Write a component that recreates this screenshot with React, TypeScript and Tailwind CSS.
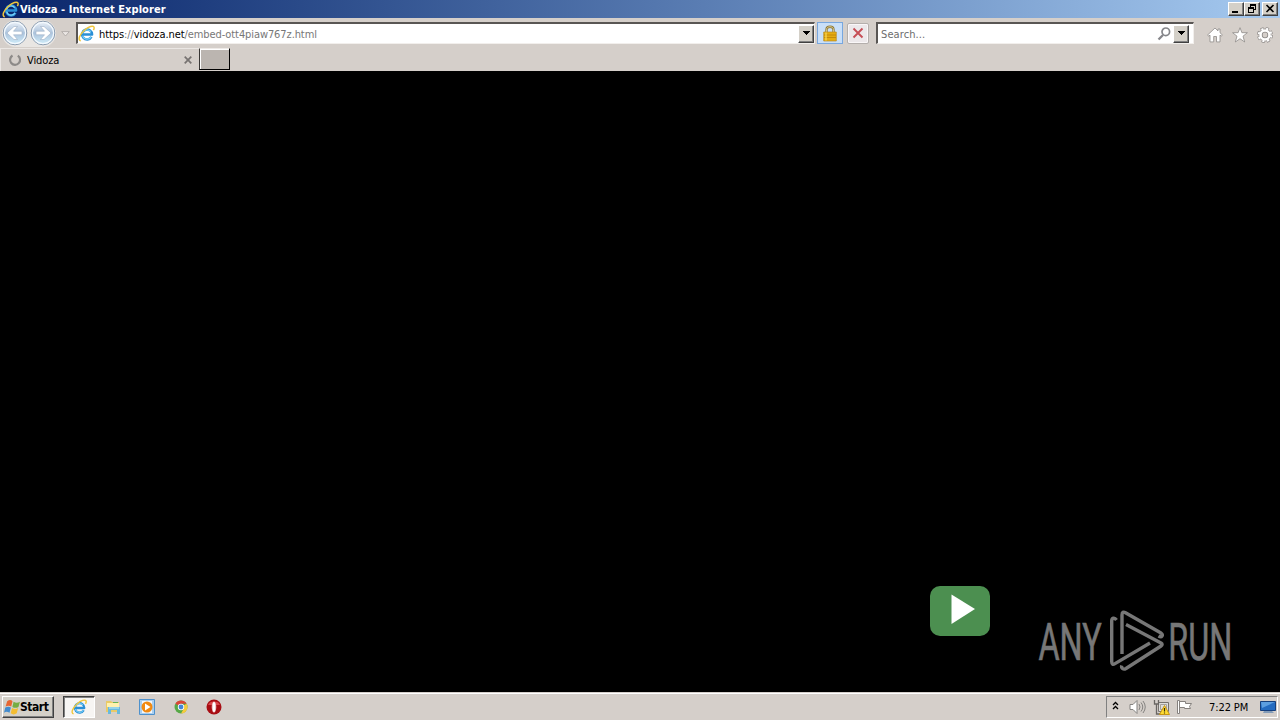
import React from "react";

function IEIcon({ className }: { className: string }) {
  return (
    <svg viewBox="0 0 16 16" className={className} fill="none">
      <path d="M12.700 11.200A4.700 4.700 0 1 1 13.300 9H5" stroke="#2a8fd6" strokeWidth="2.300" strokeLinejoin="round" />
      <path d="M12.300 11.200A4.300 4.300 0 0 1 4.400 10M4.200 8A4.500 4.500 0 0 1 12 6.200" stroke="#7ad2f8" strokeWidth="1.100" />
      <path d="M2.600 14.800C-.4 14.200 1.400 9 6 4.900 10 1.400 14.200.2 15 1.900c.4.900.1 1.900-.5 2.900" stroke="#f0c63c" strokeWidth="1.400" />
    </svg>
  );
}

function Arrow({ back }: { back?: boolean }) {
  return (
    <svg viewBox="0 0 26 26" className="size-[26px] shrink-0">
      <defs>
        <linearGradient id={back ? "gb" : "gf"} x1="0" y1="0" x2="0" y2="1">
          <stop offset="0" stopColor="#edf2f9" />
          <stop offset=".5" stopColor="#acc3dc" />
          <stop offset="1" stopColor="#d2effb" />
        </linearGradient>
      </defs>
      <circle cx="13" cy="13" r="11.8" fill={back ? "url(#gb)" : "url(#gf)"} stroke="#8395aa" strokeWidth="1" />
      <circle cx="13" cy="13" r="10.6" fill="none" stroke="#f3f9fe" strokeWidth="1.200" />
      <path
        d={back ? "M5 13l7-6.500h3.500L11.500 11.200h8.500v3.600H11.500l4 4.700H12z" : "M21 13l-7-6.500h-3.500l4 4.700H6v3.600h8.500l-4 4.700H14z"}
        fill="#fff"
        stroke="#9db0c6"
        strokeWidth=".6"
      />
    </svg>
  );
}

const raised =
  "border border-t-white border-l-white border-r-[#404040] border-b-[#404040] bg-[#d4d0c8] shadow-[inset_-1px_-1px_0_#808080]";

function DropButton() {
  return (
    <div className={"flex h-[18px] w-4 items-center justify-center " + raised}>
      <svg viewBox="0 0 7 4" className="mb-[1px] h-1 w-[7px]" shapeRendering="crispEdges">
        <path d="M0 0h7L3.500 4z" fill="#000" />
      </svg>
    </div>
  );
}

function TitleBar() {
  return (
    <header className="flex h-[18px] shrink-0 items-center bg-linear-to-r from-[#0a246a] to-[#a6caf0] pr-[2px] pl-[2px]">
      <IEIcon className="size-[17px]" />
      <span className="mt-[1px] ml-[1px] text-[11px] leading-[17px] font-bold tracking-[0.06px] whitespace-nowrap text-white">
        Vidoza - Internet Explorer
      </span>
      <div className="ml-auto flex">
        <div className={"h-[14px] w-4 " + raised}>
          <svg viewBox="0 0 14 12" className="h-3 w-[14px]"><path d="M3 8h6v2H3z" /></svg>
        </div>
        <div className={"h-[14px] w-4 " + raised}>
          <svg viewBox="0 0 14 12" className="h-3 w-[14px]" fillRule="evenodd" shapeRendering="crispEdges">
            <path d="M5 1h6v6H9V6h1V3H6v1H5zM3 4h6v6H3zM4 6v3h4V6z" />
          </svg>
        </div>
        <div className={"ml-[2px] h-[14px] w-4 " + raised}>
          <svg viewBox="0 0 14 12" className="h-3 w-[14px]">
            <path d="M3.500 2l7 7M10.500 2l-7 7" stroke="#000" strokeWidth="1.6" />
          </svg>
        </div>
      </div>
    </header>
  );
}

function NavBar() {
  return (
    <div className="flex h-[30px] shrink-0 items-center bg-[#d5cfca] pl-[2px]">
      <div className="flex h-[27px] items-center rounded-full bg-[#e9e6e3]">
        <Arrow back />
        <div className="w-[2px]" />
        <Arrow />
      </div>
      <svg viewBox="0 0 9 6" className="mt-[2px] ml-[5px] h-[6px] w-[9px]">
        <path d="M.7.600h7.600L4.500 5z" fill="#ebe7e4" stroke="#aaa5a1" strokeWidth=".8" />
      </svg>
      <div className="ml-[6px] flex h-[22px] w-[739px] items-center border-t-2 border-r border-b border-l-2 border-t-[#595654] border-r-[#f2efec] border-b-[#f2efec] border-l-[#595654] bg-white">
        <IEIcon className="size-[17px]" />
        <span className="mt-[2px] ml-1 text-[11px] leading-4 tracking-[-0.09px] whitespace-nowrap text-[#777]">
          <span className="text-black">https</span>://<span className="text-black">vidoza.net</span>
          /embed-ott4piaw767z.html
        </span>
        <div className="ml-auto"><DropButton /></div>
      </div>
      <div className="ml-[2px] flex h-[22px] w-[26px] items-center justify-center border border-[#78a7df] bg-[#c9dff8]">
        <svg viewBox="0 0 14 17" className="h-[17px] w-[14px]" fill="none">
          <path d="M3.500 8V4.500C3.500.8 10.500.8 10.500 4.500V8" stroke="#8c7737" strokeWidth="2.300" />
          <path d="M3.500 8V4.500C3.500.8 10.500.8 10.500 4.500V8" stroke="#ead99d" strokeWidth=".8" />
          <path d="M.7 7h12.600v9H.7z" fill="#e5ad13" stroke="#b98b22" strokeWidth=".7" />
          <path d="M1 10h12M1 12.500h12" stroke="#b77d07" strokeWidth=".7" />
          <path d="M3 7.500v8" stroke="#ffe469" />
        </svg>
      </div>
      <div className="ml-1 flex h-[21px] w-[22px] items-center justify-center rounded-[2px] border border-[#b4afac] bg-[#ece8ea] shadow-[inset_0_0_0_1px_#faf7f8]">
        <svg viewBox="0 0 12 12" className="size-3">
          <path d="M1.500 1.500l9 9M10.500 1.500l-9 9" stroke="#c64e56" strokeWidth="1.9" />
        </svg>
      </div>
      <div className="ml-[7px] flex h-[22px] w-[318px] items-center border-t-2 border-r border-b border-l-2 border-t-[#595654] border-r-[#f2efec] border-b-[#f2efec] border-l-[#595654] bg-white pr-1 pl-[3px]">
        <span className="mt-[2px] text-[11px] leading-4 tracking-[0.1px] text-[#6d6d6d]">Search...</span>
        <svg viewBox="0 0 15 15" className="ml-auto size-[15px]" fill="none" stroke="#85868a">
          <circle cx="8.800" cy="5.800" r="3.800" strokeWidth="1.700" />
          <path d="M6 9l-4.500 4.500" strokeWidth="2.300" />
        </svg>
        <div className="ml-[1px]"><DropButton /></div>
      </div>
      <div className="mt-1 ml-[13px] flex gap-[9px]">
        <svg viewBox="0 0 16 16" className="size-4" fill="#fff" stroke="#8e8a88" strokeWidth=".8">
          <path d="M8 1L.6 8l1.200 1.100L3 8.100v6.800h3.700V9.500h2.800v5.400H13V8.100l1.200 1 1.200-1.100L13 5.700V2h-2v1.900z" />
        </svg>
        <svg viewBox="0 0 16 16" className="size-4" fill="#fff" stroke="#8e8a88" strokeWidth=".8">
          <path d="M8 .7l1.900 5h5.500l-4.400 3.500 1.700 5.800L8 11.700 3.300 15 5 9.200.6 5.700h5.500z" />
        </svg>
        <svg viewBox="0 0 16 16" className="size-4" fill="none">
          <circle cx="8" cy="8" r="6.300" stroke="#8e8a88" strokeWidth="3.400" strokeDasharray="2.900 2.050" />
          <circle cx="8" cy="8" r="4.400" stroke="#8e8a88" strokeWidth="4" />
          <circle cx="8" cy="8" r="6.300" stroke="#fff" strokeWidth="2" strokeDasharray="2.100 2.850" strokeDashoffset="-.4" />
          <circle cx="8" cy="8" r="4.500" stroke="#fff" strokeWidth="2.600" />
        </svg>
      </div>
    </div>
  );
}

function TabBar() {
  return (
    <div className="flex h-[23px] shrink-0 bg-[#d5cfca]">
      <div className="flex w-[199px] items-center border-t border-l border-[#ebe7e4] pl-[7px]">
        <svg viewBox="0 0 14 14" className="size-[14px]" fill="none">
          <path d="M4.500 2.500A5 5 0 1 0 9.800 2.600" stroke="#8d8a88" strokeWidth="2.200" />
        </svg>
        <span className="mt-[2px] ml-[5px] text-[11px] leading-5 tracking-[-0.1px] text-black">Vidoza</span>
        <svg viewBox="0 0 8 8" className="mr-[7px] ml-auto size-2">
          <path d="M.7.700l6.600 6.600M7.300.7L.7 7.300" stroke="#777371" strokeWidth="1.700" />
        </svg>
      </div>
      <div className="h-[22px] w-[31px] border-t border-r border-b border-l border-t-[#eeeae7] border-r-black border-b-black border-l-[#383634] bg-[#bbb5b0] shadow-[inset_1px_1px_0_#fff]" />
    </div>
  );
}

function Content() {
  return (
    <main className="flex min-h-0 flex-1 bg-black">
      <div className="mt-[515px] ml-[930px] flex h-[50px] w-[60px] shrink-0 rounded-[10px] bg-[#4c8f50]">
        <svg viewBox="0 0 60 50" className="h-[50px] w-[60px]"><path d="M21.500 8.500L45 23 21.500 38z" fill="#fff" /></svg>
      </div>
      <svg viewBox="0 0 243 78" className="mt-[536px] ml-[47px] h-[78px] w-[243px] shrink-0 overflow-visible" fill="none">
        <g fill="#777" stroke="#777" strokeWidth=".7" className="font-['Roboto',sans-serif] text-[52px]">
          <text transform="translate(1.500 52.500) scale(.622 1)">ANY</text>
          <text transform="translate(131.300 52.500) scale(.622 1)">RUN</text>
        </g>
        <g stroke="#777" strokeWidth="3.400" strokeLinejoin="round">
          <path d="M85 47V8C85 5 86.500 4.500 88.500 5.700L124 26C126.500 28 125 31 121.500 29" />
          <path d="M79.500 13C77.500 10 74.700 11 74.700 14V54.500C74.700 57.500 76 57.800 78 56.600L113 36" />
          <path d="M89 17.500L124 36C125.500 37 125.500 38 124 39L89 61.500C86.500 63 84 61.500 84.700 58.500" />
        </g>
      </svg>
    </main>
  );
}

function Taskbar() {
  return (
    <footer className="flex h-[28px] shrink-0 items-center border-t border-[#d5cfca] bg-[#d5cfca] pl-[2px] shadow-[inset_0_1px_0_#fff]">
      <div className={"mt-[1px] flex h-[22px] w-[52px] items-center pl-[1px] " + raised}>
        <svg viewBox="0 0 16 16" className="size-[17px] shrink-0">
          <path d="M3 2q3-2 5 0L6.800 7Q4.500 5.500 1.500 7z" fill="#e76632" />
          <path d="M9 2.500q3 2 6 0L13.600 7.500q-2.800 1.700-5.700 0z" fill="#75ad44" />
          <path d="M1.200 8q3-1.500 5.300 0l-1.300 5q-3-2-5.200 0z" fill="#438bce" />
          <path d="M7.600 8.500q3 1.800 5.700 0L12 13.500q-3 2-5.700 0z" fill="#f4bd31" />
        </svg>
        <span className="-ml-[1px] text-[12px] leading-5 font-bold tracking-[-0.45px] text-black">Start</span>
      </div>
      <div className="mt-[1px] ml-[9px] flex h-[22px] w-8 items-center justify-center border border-t-[#404040] border-r-white border-b-white border-l-[#404040] bg-[#f7f5f3] shadow-[inset_1px_1px_0_#808080]">
        <IEIcon className="size-4" />
      </div>
      <svg viewBox="0 0 16 16" className="mt-[1px] ml-[10px] size-4">
        <path d="M1 2h5l1 1h7v10H1z" fill="#e9ca67" />
        <path d="M2 4h12v4H2z" fill="#fff1ae" />
        <path d="M8 3h5v1H8z" fill="#66b45a" />
        <path d="M3 8h12v7h-3v-4H6v4H3z" fill="#69b9dd" />
        <path d="M4 9h10" stroke="#c3edf8" />
      </svg>
      <svg viewBox="0 0 16 16" className="mt-[1px] ml-[18px] size-4">
        <path d="M.5.500h15v15H.5z" fill="#a9cff0" stroke="#4e91cc" />
        <path d="M3 2h10v12H3z" fill="#f2f7fc" />
        <circle cx="8" cy="8" r="5.500" fill="#f18a12" />
        <path d="M6 4.500L11.500 8 6 11.500z" fill="#fff" />
      </svg>
      <svg viewBox="0 0 16 16" className="mt-[1px] ml-[18px] size-4">
        <circle cx="8" cy="8" r="6.500" fill="#57a846" />
        <path d="M8 8L2.400 4.700A6.500 6.500 0 0 1 13.600 4.700H8z" fill="#db4537" />
        <path d="M8 8h.1L13.600 4.700A6.500 6.500 0 0 1 8 14.500L10.800 9.500z" fill="#f6cb3d" />
        <circle cx="8" cy="8" r="3.200" fill="#fff" /><circle cx="8" cy="8" r="2.400" fill="#4386d6" />
      </svg>
      <svg viewBox="0 0 16 16" className="mt-[1px] ml-[17px] size-4">
        <circle cx="8" cy="8" r="7.500" fill="#a80d13" />
        <path d="M2 6a6.300 5 0 0 1 12 0z" fill="#db464b" />
        <ellipse cx="8" cy="8" rx="2.300" ry="5.600" fill="#e9b9ba" />
        <ellipse cx="8" cy="8" rx="1.300" ry="5" fill="#fff" />
      </svg>
      <div className="mt-[1px] mr-[2px] ml-auto flex h-[22px] w-[172px] items-center border border-t-[#808080] border-r-white border-b-white border-l-[#808080] pl-[5px]">
        <svg viewBox="0 0 7 9" className="mb-1 h-[9px] w-[7px]" fill="none" stroke="#000" strokeWidth="1.300">
          <path d="M1 4l2.500-2.500L6 4M1 8l2.500-2.500L6 8" />
        </svg>
        <svg viewBox="0 0 17 16" className="ml-[10px] h-4 w-[17px]" fill="none" stroke="#858381">
          <path d="M1 5.500h3L8 1.500v13l-4-4H1z" fill="#fff" />
          <path d="M10 5q2 3 0 6M12 3.500q3.500 4.500 0 9M14 2q4.500 6 0 12" />
        </svg>
        <svg viewBox="0 0 17 17" className="ml-[7px] size-[17px]" fill="none">
          <path d="M5.500 3.500h10v9h-10z" fill="#dedede" stroke="#77736f" />
          <path d="M7.500 5.500h6v5h-6z" stroke="#a5a19b" />
          <path d="M1.500 1v4h4V1M3.500 5v10h5" stroke="#696663" strokeWidth="1.300" />
          <path d="M11.500 6.500l5 9h-10z" fill="#ffdc32" stroke="#c89612" />
          <path d="M11.500 9v3.500M11.500 13.500v1" stroke="#332b0d" strokeWidth="1.200" />
        </svg>
        <svg viewBox="0 0 17 16" className="ml-[6px] h-4 w-[17px]" fill="#fff" stroke="#85817e">
          <path d="M1.500 1.500h2v13h-2zM3.500 2.500h6v2h6l-2 3 1 2h-6v-1h-5z" />
        </svg>
        <span className="mt-[1px] ml-4 text-[11px] leading-5 tracking-[-0.1px] whitespace-nowrap text-black">7:22 PM</span>
        <svg viewBox="0 0 16 14" className="mr-[1px] ml-auto h-[14px] w-4">
          <path d="M.5 1.500h15v9H.5z" fill="#246bc0" stroke="#153f7d" />
          <path d="M1 2h14L2 8z" fill="#5c9ee0" />
          <path d="M4 11h8l2 2H3z" fill="#839bb7" />
        </svg>
      </div>
    </footer>
  );
}

export default function App() {
  return (
    <div className="flex h-[720px] w-[1280px] flex-col overflow-hidden bg-black font-['DejaVu_Sans_Condensed','DejaVu_Sans',sans-serif]">
      <TitleBar />
      <NavBar />
      <TabBar />
      <Content />
      <Taskbar />
    </div>
  );
}
